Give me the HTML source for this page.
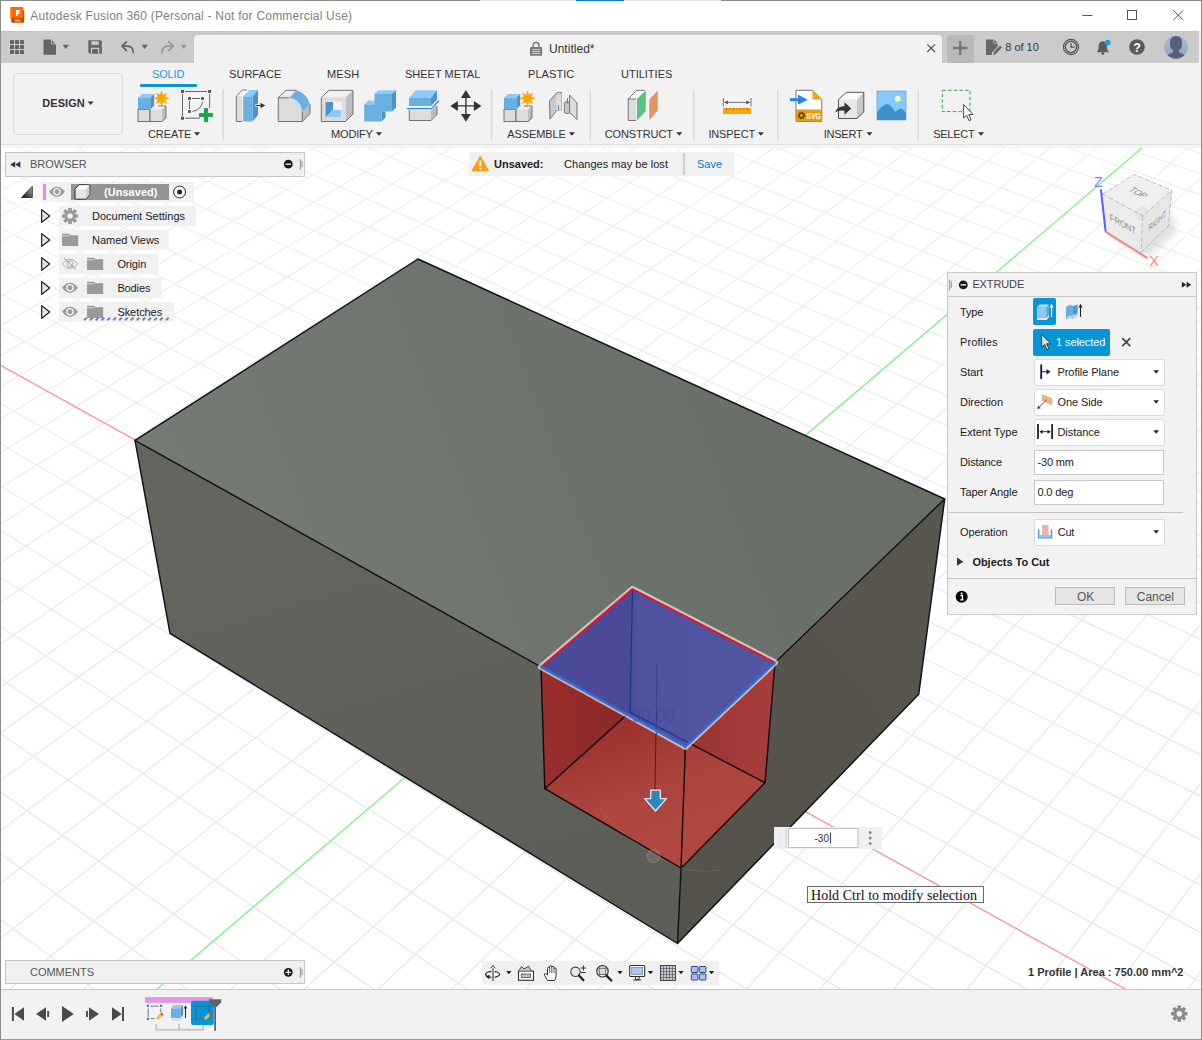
<!DOCTYPE html><html><head><meta charset="utf-8"><title>Fusion</title><style>

*{box-sizing:border-box;margin:0;padding:0}
html,body{width:1202px;height:1040px;overflow:hidden;background:#fff}
body{position:relative;font-family:"Liberation Sans",sans-serif;font-size:11px;color:#222}
.a{position:absolute}
.t{position:absolute;white-space:nowrap}
svg{overflow:visible}

</style></head><body>
<svg width="1202" height="844" viewBox="0 146 1202 844" style="position:absolute;left:0;top:146px">
<defs>
<linearGradient id="gg" gradientUnits="userSpaceOnUse" x1="0" y1="146" x2="0" y2="990"><stop offset="0" stop-color="#f0f0f0"/><stop offset="0.5" stop-color="#ebebeb"/><stop offset="1" stop-color="#e7e7e7"/></linearGradient>
<linearGradient id="gt" gradientUnits="userSpaceOnUse" x1="200" y1="560" x2="800" y2="330"><stop offset="0" stop-color="#757b74"/><stop offset="0.55" stop-color="#6e736d"/><stop offset="1" stop-color="#696e67"/></linearGradient>
<linearGradient id="gl" gradientUnits="userSpaceOnUse" x1="300" y1="500" x2="420" y2="900"><stop offset="0" stop-color="#656560"/><stop offset="1" stop-color="#5e5e59"/></linearGradient>
<linearGradient id="gr" gradientUnits="userSpaceOnUse" x1="680" y1="800" x2="940" y2="600"><stop offset="0" stop-color="#54524b"/><stop offset="1" stop-color="#59564e"/></linearGradient>
<linearGradient id="gfl" gradientUnits="userSpaceOnUse" x1="630" y1="712" x2="681" y2="868"><stop offset="0" stop-color="#9a302d"/><stop offset="0.5" stop-color="#ac453f"/><stop offset="1" stop-color="#b04841"/></linearGradient>
<linearGradient id="gwl" gradientUnits="userSpaceOnUse" x1="541" y1="700" x2="632" y2="700"><stop offset="0" stop-color="#982f2c"/><stop offset="1" stop-color="#8b2826"/></linearGradient>
<linearGradient id="gwr" gradientUnits="userSpaceOnUse" x1="632" y1="700" x2="775" y2="700"><stop offset="0" stop-color="#8e2b29"/><stop offset="0.5" stop-color="#9c3634"/><stop offset="1" stop-color="#a63e3b"/></linearGradient>
<linearGradient id="gb" gradientUnits="userSpaceOnUse" x1="541" y1="660" x2="775" y2="660"><stop offset="0" stop-color="#4b4b9b"/><stop offset="0.38" stop-color="#4a4a98"/><stop offset="0.42" stop-color="#5052a0"/><stop offset="1" stop-color="#5256a2"/></linearGradient>
</defs>
<rect x="0" y="146" width="1202" height="844" fill="#fff"/>
<path d="M-5.0 145.9L4.8 141.0M-5.0 169.4L50.7 141.0M-5.0 193.7L96.5 141.0M-5.0 218.8L142.3 141.0M-5.0 244.8L188.2 141.0M-5.0 271.7L234.0 141.0M-5.0 299.6L279.8 141.0M-5.0 328.6L325.6 141.0M-5.0 358.6L371.4 141.0M-5.0 389.9L417.3 141.0M-5.0 422.3L463.1 141.0M-5.0 456.1L508.9 141.0M-5.0 491.2L554.7 141.0M-5.0 527.8L600.5 141.0M-5.0 566.0L646.3 141.0M-5.0 605.9L692.1 141.0M-5.0 647.6L737.9 141.0M-5.0 691.1L783.7 141.0M-5.0 736.7L829.5 141.0M-5.0 784.5L875.3 141.0M-5.0 834.7L921.1 141.0M-5.0 887.3L966.9 141.0M-5.0 942.7L1012.7 141.0M2.5 995.0L1058.5 141.0M76.4 995.0L1104.3 141.0M224.1 995.0L1195.9 141.0M297.9 995.0L1207.0 172.3M371.8 995.0L1207.0 216.0M445.6 995.0L1207.0 262.4M519.4 995.0L1207.0 311.9M593.3 995.0L1207.0 364.6M667.1 995.0L1207.0 421.1M740.9 995.0L1207.0 481.7M814.8 995.0L1207.0 546.7M888.6 995.0L1207.0 616.9M962.4 995.0L1207.0 692.8M1036.2 995.0L1207.0 775.0M1110.0 995.0L1207.0 864.6M1183.8 995.0L1207.0 962.4M8.2 995.0L-5.0 984.8M101.8 995.0L-5.0 915.2M195.4 995.0L-5.0 849.7M288.9 995.0L-5.0 788.1M382.5 995.0L-5.0 730.0M476.1 995.0L-5.0 675.1M569.7 995.0L-5.0 623.1M663.2 995.0L-5.0 573.9M756.8 995.0L-5.0 527.2M850.3 995.0L-5.0 482.9M943.8 995.0L-5.0 440.6M1037.4 995.0L-5.0 400.4M1207.0 985.5L-5.0 325.5M1207.0 935.9L-5.0 290.5M1207.0 888.5L-5.0 257.0M1207.0 843.0L-5.0 225.0M1207.0 799.5L-5.0 194.2M1207.0 757.7L-5.0 164.8M1207.0 717.6L4.4 141.0M1207.0 679.1L62.5 141.0M1207.0 642.0L120.5 141.0M1207.0 606.4L178.5 141.0M1207.0 572.0L236.5 141.0M1207.0 538.9L294.5 141.0M1207.0 507.0L352.5 141.0M1207.0 476.2L410.5 141.0M1207.0 446.5L468.5 141.0M1207.0 417.7L526.5 141.0M1207.0 389.9L584.5 141.0M1207.0 363.1L642.5 141.0M1207.0 337.1L700.4 141.0M1207.0 311.9L758.4 141.0M1207.0 287.5L816.4 141.0M1207.0 263.8L874.4 141.0M1207.0 240.9L932.3 141.0M1207.0 218.6L990.3 141.0M1207.0 197.0L1048.3 141.0M1207.0 176.1L1106.2 141.0M1207.0 155.7L1164.2 141.0" stroke="url(#gg)" stroke-width="1.25" fill="none"/>
<line x1="-2" y1="363.8" x2="1128.8" y2="991" stroke="#ff9090" stroke-width="1.3"/>
<line x1="150.2" y1="995.0" x2="1150.1" y2="141.0" stroke="#7df27d" stroke-width="1.3"/>
<polygon points="418.0,259.0 944.7,499.0 685.4,746.7 135.0,440.3" fill="url(#gt)"/>
<polygon points="135.0,440.3 685.4,746.7 677.5,943.5 170.0,633.4" fill="url(#gl)"/>
<polygon points="685.4,746.7 944.7,499.0 918.7,694.3 677.5,943.5" fill="url(#gr)"/>
<polygon points="541.0,666.9 632.5,589.0 630.0,712.0 544.8,788.7" fill="url(#gwl)"/>
<polygon points="632.5,589.0 775.0,662.5 765.0,782.7 630.0,712.0" fill="url(#gwr)"/>
<polygon points="544.8,788.7 630.0,712.0 765.0,782.7 681.0,868.2" fill="url(#gfl)"/>
<path d="M418.0 259.0L944.7 499.0L918.7 694.3L677.5 943.5L170.0 633.4L135.0 440.3 Z" stroke="#0c1414" stroke-width="1.45" fill="none" stroke-linejoin="round" stroke-linecap="round"/>
<path d="M135.0 440.3L541.0 666.9 M944.7 499.0L775.0 662.5 M681.0 868.2L677.5 943.5" stroke="#0c1414" stroke-width="1.45" fill="none" stroke-linejoin="round" stroke-linecap="round"/>
<path d="M541.0 666.9L544.8 788.7L681.0 868.2L765.0 782.7L775.0 662.5 M544.8 788.7L630.0 712.0L765.0 782.7 M685.4 746.7L681.0 868.2" stroke="#100808" stroke-width="1.4" fill="none" stroke-linejoin="round" stroke-linecap="round"/>
<line x1="657" y1="664" x2="655" y2="790" stroke="#6e1414" stroke-width="1"/>
<polygon points="541.0,666.9 632.5,589.0 775.0,662.5 685.4,746.7" fill="none" stroke="#ffffff" stroke-opacity="0.6" stroke-width="6.2" stroke-linejoin="round"/>
<polygon points="541.0,666.9 632.5,589.0 775.0,662.5 685.4,746.7" fill="url(#gb)"/>
<text x="632" y="722.3" font-family="Liberation Sans" font-size="17.5" fill="#3f418c" fill-opacity="0.55" textLength="43" lengthAdjust="spacingAndGlyphs">30.00</text>
<path d="M600 809Q618 832 645 849Q664 861 681 868Q700 873 721 870" fill="none" stroke="#b0b0b0" stroke-opacity="0.22" stroke-width="0.9"/>
<circle cx="653.6" cy="856" r="6.6" fill="#9a8f8c" fill-opacity="0.3" stroke="#b8b0ae" stroke-opacity="0.3" stroke-width="1"/><path d="M655.2 854.2A2.3 2.3 0 1 0 655.2 857.8" fill="none" stroke="#5c5656" stroke-opacity="0.45" stroke-width="1.3"/>
<path d="M632.5 589.0L630.0 712.0L689.0 743.0" stroke="#173a8c" stroke-width="1.3" fill="none"/>
<line x1="657" y1="664" x2="656.3" y2="735" stroke="#3a3c86" stroke-width="1"/>
<path d="M541.0 666.9L632.5 589.0L775.0 662.5" stroke="#ff0a14" stroke-width="1.7" fill="none" stroke-linejoin="round"/>
<path d="M541.0 666.9L685.4 746.7L775.0 662.5" stroke="#2a6fdc" stroke-width="2.4" fill="none" stroke-linejoin="round"/>
</svg>
<div class="a" style="left:0px;top:0px;width:1202px;height:31px;background:#fff;"></div>
<div class="a" style="left:0px;top:0px;width:480px;height:1px;background:#8c8c8c;"></div><div class="a" style="left:480px;top:0px;width:96px;height:1px;background:#e4e4e4;"></div><div class="a" style="left:576px;top:0px;width:48px;height:1px;background:#0a78d7;"></div><div class="a" style="left:624px;top:0px;width:97px;height:1px;background:#e4e4e4;"></div><div class="a" style="left:721px;top:0px;width:481px;height:1px;background:#8c8c8c;"></div>
<svg class="a" style="left:9px;top:6px" width="17" height="18" viewBox="9 6 17 18"><path d="M11.2 10.5H24.2V21.8Q24.2 22.8 23.2 22.8H12.2Q11.2 22.8 11.2 21.8Z" fill="#b94a02"/><path d="M10 8.2Q10 7 11.2 7H22Q23.2 7 23.2 8.2V18.2H10Z" fill="#ff6a00"/><rect x="10" y="7.6" width="1.5" height="10.6" fill="#ff8a30"/><path d="M16 10H20.1V11.5H17.7V12.6H19.7V14H17.7V16H16Z" fill="#fff"/><text x="17.6" y="21.7" font-size="3.7" font-weight="bold" fill="#f3c7a6" text-anchor="middle" font-family="Liberation Sans">360</text></svg>
<div class="t" style="left:30.30px;top:7.74px;font-size:12px;line-height:16px;color:#808080;letter-spacing:0.216px;">Autodesk Fusion 360 (Personal - Not for Commercial Use)</div>
<svg class="a" style="left:1080px;top:5px" width="120" height="21" viewBox="1080 5 120 21"><path d="M1082.3 15.5H1092.5" stroke="#555" stroke-width="1"/><rect x="1127.5" y="10.5" width="9" height="9" fill="none" stroke="#555" stroke-width="1"/><path d="M1173.3 10.3L1183.3 20.1M1183.3 10.3L1173.3 20.1" stroke="#555" stroke-width="1"/></svg>
<div class="a" style="left:0px;top:31px;width:1199px;height:32px;background:#cbcbcb;"></div><div class="a" style="left:1199px;top:31px;width:3px;height:32px;background:#f2f2f2;"></div>
<div class="a" style="left:0px;top:31px;width:1199px;height:1px;background:#c4c4c4;"></div>
<div class="a" style="left:194px;top:35px;width:747.5px;height:28px;background:#f2f2f2;border-radius:4px 4px 0 0"></div>
<div class="a" style="left:0px;top:63px;width:1202px;height:82px;background:#f2f2f2;"></div>
<div class="a" style="left:0px;top:144px;width:1202px;height:1px;background:#e0e0e0;"></div><div class="a" style="left:0px;top:145px;width:1202px;height:2.6px;background:#f6f6f6;"></div>
<svg class="a" style="left:0px;top:32px" width="194" height="31" viewBox="0 32 194 31"><rect x="10" y="40" width="4" height="4" rx="0.6" fill="#646464"/><rect x="10" y="45" width="4" height="4" rx="0.6" fill="#646464"/><rect x="10" y="50" width="4" height="4" rx="0.6" fill="#646464"/><rect x="15" y="40" width="4" height="4" rx="0.6" fill="#646464"/><rect x="15" y="45" width="4" height="4" rx="0.6" fill="#646464"/><rect x="15" y="50" width="4" height="4" rx="0.6" fill="#646464"/><rect x="20" y="40" width="4" height="4" rx="0.6" fill="#646464"/><rect x="20" y="45" width="4" height="4" rx="0.6" fill="#646464"/><rect x="20" y="50" width="4" height="4" rx="0.6" fill="#646464"/><path d="M43.5 39.6H51.2L56 44.4V54.8H43.5Z" fill="#646464"/><path d="M51.6 39.2V43.9H56.4" fill="none" stroke="#cbcbcb" stroke-width="0.9"/><polygon points="62.40,44.70 69.00,44.70 65.70,48.90" fill="#646464"/><path d="M88.3 40.3H100.8L101.8 41.3V53.7H90L88.3 52Z" fill="#646464"/><rect x="91.3" y="41.3" width="7.4" height="3.6" fill="#cbcbcb"/><path d="M91.5 53.7V48.3H98.6V53.7" fill="none" stroke="#cbcbcb" stroke-width="1.2"/><path d="M126.5 41.8L122 46.2L126.5 50.6M122.3 46.2H128Q133 46.5 133.3 52.5" fill="none" stroke="#646464" stroke-width="1.8" stroke-linejoin="round" stroke-linecap="round"/><polygon points="141.40,44.70 148.00,44.70 144.70,48.90" fill="#646464"/><path d="M168.8 41.8L173.3 46.2L168.8 50.6M173 46.2H167.3Q162.3 46.5 162 52.5" fill="none" stroke="#9a9a9a" stroke-width="1.8" stroke-linejoin="round" stroke-linecap="round"/><polygon points="180.50,44.70 187.10,44.70 183.80,48.90" fill="#9a9a9a"/></svg>
<svg class="a" style="left:525px;top:38px" width="420" height="22" viewBox="525 38 420 22"><rect x="530" y="47" width="12.1" height="8.8" rx="0.8" fill="#777"/><path d="M533.2 47V45.4Q533.2 42.6 536 42.6Q538.9 42.6 538.9 45.4V47" fill="none" stroke="#777" stroke-width="1.5"/><path d="M532 49.6H540.2M532 51.6H540.2M532 53.6H540.2" stroke="#f2f2f2" stroke-width="0.8"/><path d="M927.3 44.3L935 52M935 44.3L927.3 52" stroke="#555" stroke-width="1.2"/></svg>
<div class="t" style="left:549.00px;top:40.64px;font-size:12px;line-height:16px;color:#333;letter-spacing:0.016px;">Untitled*</div>
<div class="a" style="left:946.5px;top:35px;width:27.5px;height:27.5px;background:#b9b9b9;border-radius:3px"></div>
<svg class="a" style="left:946px;top:35px" width="256" height="28" viewBox="946 35 256 28"><path d="M960.3 41V55M953.3 48H967.3" stroke="#777" stroke-width="2.4"/><path d="M986 39.5H994L997.6 43V46.5L992 52.5V55H986Z" fill="#666"/><path d="M993.8 39.3V43.3H997.8" fill="none" stroke="#cbcbcb" stroke-width="0.8"/><path d="M992.8 55.3L993.6 51.8L1000 45.2L1002.3 47.5L995.9 54.2Z" fill="#666" stroke="#cbcbcb" stroke-width="0.7"/><circle cx="1071" cy="47" r="7.6" fill="none" stroke="#555" stroke-width="1.1"/><circle cx="1071" cy="47" r="5.7" fill="none" stroke="#555" stroke-width="1.5"/><path d="M1071 43.3V47.2H1074.6" fill="none" stroke="#555" stroke-width="1.3"/><path d="M1096.6 52.3Q1098.7 50.5 1098.7 46.5Q1098.7 41.5 1102.8 41.2Q1106.9 41.5 1106.9 46.5Q1106.9 50.5 1109 52.3Z" fill="#5a5a5a"/><circle cx="1102.8" cy="53.6" r="1.4" fill="#5a5a5a"/><circle cx="1107.7" cy="42.6" r="2.9" fill="#1e9ae6"/><circle cx="1137" cy="47" r="7.8" fill="#5a5a5a"/><text x="1137" y="51.6" font-size="12.5" font-weight="bold" fill="#fff" text-anchor="middle" font-family="Liberation Sans">?</text><defs><linearGradient id="av" x1="0" y1="0" x2="0" y2="1"><stop offset="0" stop-color="#b0c1da"/><stop offset="1" stop-color="#8a9ebf"/></linearGradient><clipPath id="avc"><circle cx="1176" cy="47" r="11.8"/></clipPath></defs><circle cx="1176" cy="47" r="11.8" fill="url(#av)"/><g clip-path="url(#avc)"><path d="M1170.1 41.5Q1170.3 36 1176 35.9Q1181.8 36 1181.9 41.5V45Q1181.9 48.6 1179 50.3V52.2Q1183.5 54 1186.5 56.5V60H1165.5V56.5Q1168.5 54 1173 52.2V50.3Q1170.1 48.6 1170.1 45Z" fill="#55627a"/></g></svg>
<div class="t" style="left:1005.30px;top:40.03px;font-size:11px;line-height:14px;color:#333;letter-spacing:-0.020px;">8 of 10</div>
<div class="a" style="left:13px;top:73.4px;width:109.6px;height:61.2px;background:#f2f2f2;border:1.3px solid #dadada;border-radius:5px"></div>
<div class="t" style="left:42.30px;top:96.13px;font-size:11px;line-height:14px;color:#333;font-weight:bold;letter-spacing:0.054px;">DESIGN</div>
<svg class="a" style="left:86px;top:99px" width="12" height="9" viewBox="86 99 12 9"><polygon points="87.60,101.50 93.60,101.50 90.60,105.10" fill="#333"/></svg>
<div class="t" style="left:152.00px;top:67.13px;font-size:11px;line-height:14px;color:#1b9ae0;letter-spacing:-0.142px;">SOLID</div>
<div class="a" style="left:139.5px;top:83.5px;width:57px;height:3px;background:#0696d7;border-radius:1px"></div>
<div class="t" style="left:229.00px;top:67.13px;font-size:11px;line-height:14px;color:#333;letter-spacing:0.049px;">SURFACE</div>
<div class="t" style="left:327.00px;top:67.13px;font-size:11px;line-height:14px;color:#333;letter-spacing:0.129px;">MESH</div>
<div class="t" style="left:405.00px;top:67.13px;font-size:11px;line-height:14px;color:#333;letter-spacing:-0.008px;">SHEET METAL</div>
<div class="t" style="left:528.00px;top:67.13px;font-size:11px;line-height:14px;color:#333;letter-spacing:0.064px;">PLASTIC</div>
<div class="t" style="left:621.00px;top:67.13px;font-size:11px;line-height:14px;color:#333;letter-spacing:-0.005px;">UTILITIES</div>
<div class="t" style="left:148.00px;top:127.13px;font-size:11px;line-height:14px;color:#333;letter-spacing:-0.084px;">CREATE</div>
<div class="t" style="left:331.00px;top:127.13px;font-size:11px;line-height:14px;color:#333;letter-spacing:-0.163px;">MODIFY</div>
<div class="t" style="left:507.20px;top:127.13px;font-size:11px;line-height:14px;color:#333;letter-spacing:-0.089px;">ASSEMBLE</div>
<div class="t" style="left:604.70px;top:127.13px;font-size:11px;line-height:14px;color:#333;letter-spacing:-0.094px;">CONSTRUCT</div>
<div class="t" style="left:708.40px;top:127.13px;font-size:11px;line-height:14px;color:#333;letter-spacing:-0.154px;">INSPECT</div>
<div class="t" style="left:823.70px;top:127.13px;font-size:11px;line-height:14px;color:#333;letter-spacing:-0.240px;">INSERT</div>
<div class="t" style="left:933.20px;top:127.13px;font-size:11px;line-height:14px;color:#333;letter-spacing:-0.265px;">SELECT</div>
<svg class="a" style="left:130px;top:86px" width="870" height="58" viewBox="130 86 870 58"><path d="M223.2 89.5V140.5" stroke="#dadada" stroke-width="1.6"/><path d="M491.5 89.5V140.5" stroke="#dadada" stroke-width="1.6"/><path d="M590.3 89.5V140.5" stroke="#dadada" stroke-width="1.6"/><path d="M693.8 89.5V140.5" stroke="#dadada" stroke-width="1.6"/><path d="M777.8 89.5V140.5" stroke="#dadada" stroke-width="1.6"/><path d="M918.2 89.5V140.5" stroke="#dadada" stroke-width="1.6"/><polygon points="194.00,132.20 200.00,132.20 197.00,135.80" fill="#333"/><polygon points="376.00,132.20 382.00,132.20 379.00,135.80" fill="#333"/><polygon points="568.90,132.20 574.90,132.20 571.90,135.80" fill="#333"/><polygon points="676.30,132.20 682.30,132.20 679.30,135.80" fill="#333"/><polygon points="757.90,132.20 763.90,132.20 760.90,135.80" fill="#333"/><polygon points="866.50,132.20 872.50,132.20 869.50,135.80" fill="#333"/><polygon points="978.00,132.20 984.00,132.20 981.00,135.80" fill="#333"/><rect x="138" y="109.5" width="12" height="12" fill="#dcdcdc" stroke="#666" stroke-width="0.9"/><polygon points="150,109.5 154,106 166,106 162,109.5" fill="#f0f0f0"/><polygon points="162,109.5 166,106 166,118 162,121.5" fill="#bdbdbd"/><rect x="150" y="109.5" width="12" height="12" fill="#dcdcdc"/><path d="M150 109.5V121.5H162L166 118V106H158" fill="none" stroke="#666" stroke-width="0.9"/><polygon points="138,98 142,94 154.2,94 150.3,98" fill="#8ccbf9"/><polygon points="150.3,98 154.2,94 154.2,105.5 150.3,109.5" fill="#4a93cc"/><rect x="138" y="98" width="12.3" height="11.5" fill="#6aafe2"/><polygon points="161.50,90.10 162.99,94.70 167.30,92.50 165.10,96.81 169.70,98.30 165.10,99.79 167.30,104.10 162.99,101.90 161.50,106.50 160.01,101.90 155.70,104.10 157.90,99.79 153.30,98.30 157.90,96.81 155.70,92.50 160.01,94.70" fill="#ffa500"/><path d="M185 91.5H207M182.5 94V116M185 118.2H200M209.6 94V108" stroke="#555" stroke-width="0.9" fill="none"/><rect x="181" y="90" width="3" height="3" fill="#555"/><rect x="208.1" y="90" width="3" height="3" fill="#555"/><rect x="181" y="116.7" width="3" height="3" fill="#555"/><path d="M192 98.5H200M189.5 101V109M202.6 101.5Q201.5 109.5 192.5 111.5" stroke="#555" stroke-width="0.9" fill="none"/><rect x="188.1" y="97.1" width="2.8" height="2.8" fill="#555"/><rect x="201.1" y="97.1" width="2.8" height="2.8" fill="#555"/><rect x="188.1" y="110.1" width="2.8" height="2.8" fill="#555"/><path d="M206 108V122M199 115H213" stroke="#1fa64a" stroke-width="4.2"/><path d="M236.3 96L242.5 90H247L242.3 96Z" fill="#f6f6f6"/><rect x="236.3" y="96" width="6" height="25.5" fill="#dcdcdc"/><path d="M242.3 121.5H236.3V96L242.5 90H247" fill="none" stroke="#666" stroke-width="0.9"/><polygon points="243.2,96.5 249.5,90 258,90 252.5,96.5" fill="#8ccbf9"/><polygon points="252.5,96.5 258,90 258,115 252.5,121.5" fill="#4a93cc"/><rect x="243.2" y="96.5" width="9.3" height="25" fill="#6aafe2"/><path d="M255.5 105.5H262" stroke="#fff" stroke-width="2.4"/><path d="M256 105.5H262" stroke="#333" stroke-width="1"/><polygon points="260.5,102.8 265.2,105.5 260.5,108.2" fill="#333"/><path d="M278.3 97.8L286 90.3H296.5L289.5 97.8Z" fill="#ececec"/><path d="M278.3 97.8H289.5Q300.5 99.5 302.3 111.5V121.5H278.3Z" fill="#dcdcdc"/><path d="M302.3 111.5L310 104.5V113.5L302.3 121.5Z" fill="#bdbdbd"/><path d="M289.5 97.8L296.5 90.3Q307.5 93.5 310 104.5L302.3 111.5Q300.5 99.5 289.5 97.8Z" fill="#6aafe2"/><path d="M289.5 97.8H278.3L286 90.3H296.5M278.3 97.8V121.5H302.3L310 113.5V104.5M302.3 121.5V111.5" fill="none" stroke="#666" stroke-width="0.9"/><polygon points="321.3,97.5 329,90.3 353,90.3 345.5,97.5" fill="#f0f0f0"/><polygon points="345.5,97.5 353,90.3 353,114 345.5,121.5" fill="#bdbdbd"/><rect x="321.3" y="97.5" width="24.2" height="24" fill="#dcdcdc"/><rect x="325" y="101.5" width="17" height="16.5" fill="#f2f2f2"/><polygon points="325.5,102 333,102 333,110 325.5,117.5" fill="#4a93cc"/><polygon points="325.5,117.5 333,110 341.3,110 341.3,117.5" fill="#8ccbf9"/><path d="M321.3 97.5L329 90.3H353V114L345.5 121.5H321.3Z" fill="none" stroke="#666" stroke-width="0.9"/><polygon points="374.5,94 378.5,90.2 396,90.2 392,94" fill="#8ccbf9"/><polygon points="392,94 396,90.2 396,107.5 392,111.5" fill="#4a93cc"/><rect x="374.5" y="94" width="17.5" height="17.5" fill="#6aafe2"/><polygon points="364.2,104.5 368.2,100.5 375,100.5 375,104.5" fill="#8ccbf9"/><polygon points="381.5,111.5 385.5,111.5 385.5,117.5 381.5,121.5" fill="#4a93cc"/><rect x="364.2" y="104.5" width="17.3" height="17" fill="#6aafe2"/><polygon points="409,98 415.5,90.3 437,90.3 431,98" fill="#8ccbf9"/><polygon points="431,98 437,90.3 437,99.5 431,106" fill="#4a93cc"/><rect x="409" y="98" width="22" height="8" fill="#6aafe2"/><polygon points="409.3,110.5 431,110.5 431,120.5 409.3,120.5" fill="#dcdcdc"/><polygon points="431,110.5 437,105 437,114.5 431,120.5" fill="#bdbdbd"/><path d="M409.3 110V120.5H431L437 114.5V106" fill="none" stroke="#666" stroke-width="0.9"/><path d="M407 108.6H431.5L439 100.5" fill="none" stroke="#1e88e5" stroke-width="1.2"/><path d="M465.9 95.9V115.9M455.9 105.9H475.9" stroke="#333" stroke-width="1.4"/><polygon points="465.9,90.1 460.9,97.9 470.9,97.9" fill="#333"/><polygon points="465.9,121.7 460.9,113.9 470.9,113.9" fill="#333"/><polygon points="450.4,105.9 457.9,100.9 457.9,110.9" fill="#333"/><polygon points="481.4,105.9 473.9,100.9 473.9,110.9" fill="#333"/><rect x="504" y="109.5" width="12" height="12" fill="#dcdcdc" stroke="#666" stroke-width="0.9"/><polygon points="516,109.5 520,106 532,106 528,109.5" fill="#f0f0f0"/><polygon points="528,109.5 532,106 532,118 528,121.5" fill="#bdbdbd"/><rect x="516" y="109.5" width="12" height="12" fill="#dcdcdc"/><path d="M516 109.5V121.5H528L532 118V106H524" fill="none" stroke="#666" stroke-width="0.9"/><polygon points="504,98 508,94 520.2,94 516.3,98" fill="#8ccbf9"/><polygon points="516.3,98 520.2,94 520.2,105.5 516.3,109.5" fill="#4a93cc"/><rect x="504" y="98" width="12.3" height="11.5" fill="#6aafe2"/><polygon points="527.50,90.10 528.99,94.70 533.30,92.50 531.10,96.81 535.70,98.30 531.10,99.79 533.30,104.10 528.99,101.90 527.50,106.50 526.01,101.90 521.70,104.10 523.90,99.79 519.30,98.30 523.90,96.81 521.70,92.50 526.01,94.70" fill="#ffa500"/><path d="M549.5 101L556 93.5Q558 91.8 561.5 92.5V110L556 110.5V111.5L550 119Z" fill="#c8c8c8" stroke="#666" stroke-width="0.9"/><path d="M556.2 94.5Q558.5 92 561.6 93V110.5H556.2Z" fill="#e0e0e0"/><ellipse cx="558.8" cy="93.6" rx="1.9" ry="0.9" fill="#f4f4f4" stroke="#888" stroke-width="0.5"/><path d="M569.5 95L577 103V119.5L569.5 112.5Z" fill="#dcdcdc" stroke="#666" stroke-width="0.9"/><path d="M564.3 103.5Q564.3 101.5 567 101.5Q569.6 101.5 569.6 103.5V113Q567 114.5 564.3 112.5Z" fill="#c4c4c4" stroke="#666" stroke-width="0.8"/><path d="M558.5 105V110M567.5 98V103.5" stroke="#1e88e5" stroke-width="0.9"/><path d="M628.2 99L636.5 90.3H644.5L636.5 99V120.5H628.2Z" fill="#f4f4f4"/><rect x="628.2" y="99" width="8" height="21.5" fill="#dcdcdc"/><path d="M628.2 99L636.5 90.3H644.5M628.2 99V120.5H636M628.2 99H636" fill="none" stroke="#666" stroke-width="0.9"/><polygon points="637,99 645.8,90.5 645.8,111 637,120.5" fill="#58c27e"/><polygon points="649.3,99.5 657.8,90.5 657.8,110.5 649.3,120.3" fill="#e2955f"/><path d="M723.3 98V106.5M751 98V106.5M725 102.4H749.5" stroke="#555" stroke-width="0.8" fill="none"/><polygon points="724,102.4 728,100.5 728,104.3" fill="#555"/><polygon points="750.3,102.4 746.3,100.5 746.3,104.3" fill="#555"/><rect x="723" y="108" width="28" height="6" fill="#fba500"/><path d="M726.5 108V110.3" stroke="#7a5a10" stroke-width="0.7"/><path d="M730 108V109.6" stroke="#7a5a10" stroke-width="0.7"/><path d="M733.5 108V110.3" stroke="#7a5a10" stroke-width="0.7"/><path d="M737 108V109.6" stroke="#7a5a10" stroke-width="0.7"/><path d="M740.5 108V110.3" stroke="#7a5a10" stroke-width="0.7"/><path d="M744 108V109.6" stroke="#7a5a10" stroke-width="0.7"/><path d="M747.5 108V110.3" stroke="#7a5a10" stroke-width="0.7"/><path d="M796 90.3H812.5L821.8 99.5V121.5H796Z" fill="#fff" stroke="#666" stroke-width="0.9"/><polygon points="812.5,90.3 821.8,99.5 812.5,99.5" fill="#f0a21c"/><rect x="796" y="109.5" width="25.8" height="12" fill="#e59a14"/><path d="M790 99.7H799" stroke="#1e88e5" stroke-width="3"/><polygon points="798,94.8 807.8,99.7 798,104.6" fill="#1e88e5"/><circle cx="801.5" cy="115.5" r="3" fill="none" stroke="#3a2a00" stroke-width="1.4" stroke-dasharray="1.2 1.1"/><circle cx="801.5" cy="115.5" r="2.2" fill="none" stroke="#3a2a00" stroke-width="0.9"/><text x="806.3" y="119" font-family="Liberation Sans" font-weight="bold" font-size="8.6" fill="#fff" textLength="14.5" lengthAdjust="spacingAndGlyphs">SVG</text><polygon points="838.5,99.5 846.5,92.3 863.8,92.3 857,99.5" fill="#fafafa"/><polygon points="857,99.5 863.8,92.3 863.8,112 857,118.5" fill="#c6c9cd"/><rect x="838.5" y="99.5" width="18.5" height="19" fill="#e6e7e9"/><path d="M838.5 99.5L846.5 92.3H863.8V112L857 118.5H838.5Z" fill="none" stroke="#444" stroke-width="0.9"/><path d="M835 112.5Q837.5 106 844.5 106.3V102.3L851.2 108.5L844.5 114.7V110.8Q839.5 109.5 835 112.5Z" fill="#333"/><rect x="877" y="91" width="29" height="29" fill="#84caff"/><path d="M877 120V112.5Q883 104 887 104Q890 104 895.5 112Q899 108.5 901 108.5Q903 108.5 906 113.5V120Z" fill="#3f90c8"/><circle cx="897.8" cy="98.8" r="3" fill="#fbf3b0"/><rect x="877" y="91" width="29" height="29" fill="none" stroke="#4a9ad8" stroke-width="0.6"/><rect x="942.3" y="90.3" width="27.7" height="21.3" fill="none" stroke="#28b04a" stroke-width="1" stroke-dasharray="3.6 2.1"/><path d="M963.6 104.5V118L966.7 115.2L969 120.6L971 119.7L968.8 114.5H973Z" fill="#fff" stroke="#333" stroke-width="0.9" stroke-linejoin="round"/></svg><div class="a" style="left:5px;top:152px;width:299.5px;height:24.5px;background:#f1f1f1;border:1px solid #c6c6c6"></div>
<div class="t" style="left:30.00px;top:157.33px;font-size:11px;line-height:14px;color:#555;letter-spacing:-0.006px;">BROWSER</div>
<svg class="a" style="left:5px;top:152px" width="300" height="25" viewBox="5 152 300 25"><polygon points="10.2,164.6 15.2,161.5 15.2,167.7" fill="#333"/><polygon points="15.3,164.6 20.3,161.5 20.3,167.7" fill="#333"/><circle cx="288.3" cy="164.2" r="4.4" fill="#1a1a1a"/><path d="M285.6 164.2H291" stroke="#fff" stroke-width="1.3"/><path d="M300.3 159V170M302 161V167.5" stroke="#777" stroke-width="0.8"/></svg>
<div class="a" style="left:41.2px;top:182.2px;width:153px;height:19.5px;background:#f1f1f1;"></div>
<div class="a" style="left:59.2px;top:206.3px;width:137px;height:19.5px;background:#f1f1f1;"></div>
<div class="a" style="left:59.2px;top:230.3px;width:110px;height:19.5px;background:#f1f1f1;"></div>
<div class="a" style="left:59.2px;top:254.3px;width:98.5px;height:19.5px;background:#f1f1f1;"></div>
<div class="a" style="left:59.2px;top:278.2px;width:102.6px;height:19.5px;background:#f1f1f1;"></div>
<div class="a" style="left:59.2px;top:302.2px;width:114.7px;height:19.6px;background:#f1f1f1;"></div>
<div class="a" style="left:43.1px;top:184px;width:2.9px;height:15.8px;background:#e48de4;"></div>
<div class="a" style="left:71.2px;top:184px;width:98px;height:15.8px;background:#949494;"></div>
<svg class="a" style="left:10px;top:180px" width="190" height="145" viewBox="10 180 190 145"><defs><linearGradient id="tg" x1="0.2" y1="1" x2="1" y2="0.3"><stop offset="0" stop-color="#1a1a1a"/><stop offset="1" stop-color="#9a9a9a"/></linearGradient></defs><polygon points="32.3,186.3 32.3,197.5 21.5,197.5" fill="url(#tg)" stroke="#222" stroke-width="0.8" stroke-linejoin="round"/><path d="M49 191.8Q53 186.8 57 186.8Q61 186.8 65 191.8Q61 196.8 57 196.8Q53 196.8 49 191.8Z" fill="#9a9a9a"/><circle cx="57" cy="191.8" r="3.1" fill="none" stroke="#f4f4f4" stroke-width="1.3"/><path d="M75 189.3L79 184.7H88.6Q89.8 184.7 89.8 186V194.5L86 199.2H76.2Q75 199.2 75 198Z" fill="#e4e6ec" stroke="#222" stroke-width="0.9" stroke-linejoin="round"/><path d="M75.6 189.3L79.3 185.2H89.2L85.8 189.3Z" fill="#fdfdfd"/><path d="M85.9 189.4L89.3 185.4V194.3L85.9 198.6Z" fill="#cfd3dc"/><circle cx="179.6" cy="192" r="5.9" fill="#fff" stroke="#222" stroke-width="1"/><circle cx="179.6" cy="192" r="2.5" fill="#222"/><path d="M41.7 209.6L49.7 216L41.7 222.4Z" fill="#e6e6e8" stroke="#111" stroke-width="1.1" stroke-linejoin="round"/><path d="M41.7 233.6L49.7 240L41.7 246.4Z" fill="#e6e6e8" stroke="#111" stroke-width="1.1" stroke-linejoin="round"/><path d="M41.7 257.6L49.7 264L41.7 270.4Z" fill="#e6e6e8" stroke="#111" stroke-width="1.1" stroke-linejoin="round"/><path d="M41.7 281.6L49.7 288L41.7 294.4Z" fill="#e6e6e8" stroke="#111" stroke-width="1.1" stroke-linejoin="round"/><path d="M41.7 305.6L49.7 312L41.7 318.4Z" fill="#e6e6e8" stroke="#111" stroke-width="1.1" stroke-linejoin="round"/><rect x="68.3" y="208" width="3.6" height="16" fill="#9a9a9a" transform="rotate(0 70.1 216)"/><rect x="68.3" y="208" width="3.6" height="16" fill="#9a9a9a" transform="rotate(45 70.1 216)"/><rect x="68.3" y="208" width="3.6" height="16" fill="#9a9a9a" transform="rotate(90 70.1 216)"/><rect x="68.3" y="208" width="3.6" height="16" fill="#9a9a9a" transform="rotate(135 70.1 216)"/><circle cx="70.1" cy="216" r="5.8" fill="#9a9a9a"/><circle cx="70.1" cy="216" r="2.7" fill="#f1f1f1"/><path d="M62 233.7H69L70.3 235.3H78.2V246.1H62Z" fill="#9a9a9a"/><path d="M62 235.8H69.3" stroke="#f1f1f1" stroke-width="0.7"/><path d="M62.3 263.8Q66 259.1 70 259.1Q74 259.1 77.7 263.8Q74 268.5 70 268.5Q66 268.5 62.3 263.8Z" fill="none" stroke="#9a9a9a" stroke-width="0.8"/><circle cx="70" cy="263.8" r="3" fill="none" stroke="#9a9a9a" stroke-width="0.8"/><path d="M64 258.1L76 269.5" stroke="#777" stroke-width="0.7"/><path d="M87 257.7H94L95.3 259.3H103.2V270.1H87Z" fill="#9a9a9a"/><path d="M87 259.8H94.3" stroke="#f1f1f1" stroke-width="0.7"/><path d="M62 287.8Q66 282.8 70 282.8Q74 282.8 78 287.8Q74 292.8 70 292.8Q66 292.8 62 287.8Z" fill="#9a9a9a"/><circle cx="70" cy="287.8" r="3.1" fill="none" stroke="#f4f4f4" stroke-width="1.3"/><path d="M87 281.7H94L95.3 283.3H103.2V294.1H87Z" fill="#9a9a9a"/><path d="M87 283.8H94.3" stroke="#f1f1f1" stroke-width="0.7"/><path d="M62 311.8Q66 306.8 70 306.8Q74 306.8 78 311.8Q74 316.8 70 316.8Q66 316.8 62 311.8Z" fill="#9a9a9a"/><circle cx="70" cy="311.8" r="3.1" fill="none" stroke="#f4f4f4" stroke-width="1.3"/><path d="M87 305.7H94L95.3 307.3H103.2V318.1H87Z" fill="#9a9a9a"/><path d="M87 307.8H94.3" stroke="#f1f1f1" stroke-width="0.7"/><path d="M84 320.3L86.8 317.7" stroke="#6a84b0" stroke-width="1.9"/><path d="M89.85 320.3L92.65 317.7" stroke="#6a84b0" stroke-width="1.9"/><path d="M95.7 320.3L98.5 317.7" stroke="#6a84b0" stroke-width="1.9"/><path d="M101.55 320.3L104.35 317.7" stroke="#6a84b0" stroke-width="1.9"/><path d="M107.4 320.3L110.2 317.7" stroke="#6a84b0" stroke-width="1.9"/><path d="M113.25 320.3L116.05 317.7" stroke="#6a84b0" stroke-width="1.9"/><path d="M119.1 320.3L121.9 317.7" stroke="#6a84b0" stroke-width="1.9"/><path d="M124.95 320.3L127.75 317.7" stroke="#6a84b0" stroke-width="1.9"/><path d="M130.8 320.3L133.6 317.7" stroke="#6a84b0" stroke-width="1.9"/><path d="M136.65 320.3L139.45 317.7" stroke="#6a84b0" stroke-width="1.9"/><path d="M142.5 320.3L145.3 317.7" stroke="#6a84b0" stroke-width="1.9"/><path d="M148.35 320.3L151.15 317.7" stroke="#6a84b0" stroke-width="1.9"/><path d="M154.2 320.3L157 317.7" stroke="#6a84b0" stroke-width="1.9"/><path d="M160.05 320.3L162.85 317.7" stroke="#6a84b0" stroke-width="1.9"/><path d="M165.9 320.3L168.7 317.7" stroke="#6a84b0" stroke-width="1.9"/></svg>
<div class="t" style="left:104.00px;top:184.83px;font-size:11px;line-height:14px;color:#fff;font-weight:bold;letter-spacing:0.036px;">(Unsaved)</div>
<div class="t" style="left:92.00px;top:209.13px;font-size:11px;line-height:14px;color:#1a1a1a;letter-spacing:0.004px;">Document Settings</div>
<div class="t" style="left:92.00px;top:233.13px;font-size:11px;line-height:14px;color:#1a1a1a;letter-spacing:-0.033px;">Named Views</div>
<div class="t" style="left:117.40px;top:257.13px;font-size:11px;line-height:14px;color:#1a1a1a;letter-spacing:-0.090px;">Origin</div>
<div class="t" style="left:117.40px;top:281.13px;font-size:11px;line-height:14px;color:#1a1a1a;letter-spacing:-0.122px;">Bodies</div>
<div class="t" style="left:117.40px;top:305.13px;font-size:11px;line-height:14px;color:#1a1a1a;letter-spacing:-0.068px;">Sketches</div>
<div class="a" style="left:469px;top:152.2px;width:264.5px;height:23.5px;background:#f1f1f1;"></div><div class="a" style="left:683.2px;top:153px;width:1.5px;height:22px;background:#cfcfcf;"></div>
<svg class="a" style="left:470px;top:152px" width="265" height="24" viewBox="470 152 265 24"><path d="M480.3 156.6L488.3 170.6H472.3Z" fill="#f6a01c" stroke="#f6a01c" stroke-width="1.2" stroke-linejoin="round"/><path d="M480.3 160.6V166.4" stroke="#fff" stroke-width="1.7"/><circle cx="480.3" cy="168.6" r="0.95" fill="#fff"/></svg>
<div class="t" style="left:494.00px;top:157.13px;font-size:11px;line-height:14px;color:#222;font-weight:bold;letter-spacing:-0.002px;">Unsaved:</div>
<div class="t" style="left:564.00px;top:157.13px;font-size:11px;line-height:14px;color:#222;letter-spacing:0.035px;">Changes may be lost</div>
<div class="t" style="left:697.00px;top:157.13px;font-size:11px;line-height:14px;color:#0a78b8;letter-spacing:-0.018px;">Save</div>
<svg class="a" style="left:1085px;top:165px" width="110" height="110" viewBox="1085 165 110 110"><defs><filter id="vb" x="-50%" y="-50%" width="200%" height="200%"><feGaussianBlur stdDeviation="5"/></filter></defs><polygon points="1112.0,236.0 1146.0,258.0 1176.0,232.0 1172.0,214.0 1140.0,232.0" fill="#000" opacity="0.13" filter="url(#vb)"/><polygon points="1134.2,174.5 1171.8,190.4 1142.7,215.8 1102.5,194.1" fill="#eeeeee" fill-opacity="0.88"/><polygon points="1102.5,194.1 1142.7,215.8 1141.1,252.3 1105.6,231.7" fill="#e9e9e9" fill-opacity="0.88"/><polygon points="1142.7,215.8 1171.8,190.4 1168.6,225.3 1141.1,252.3" fill="#e4e4e4" fill-opacity="0.88"/><polygon points="1136.0,208.5 1142.7,205.5 1147.5,209.5 1147.3,217.0 1142.5,222.5 1136.2,218.5" fill="#dfe3ea" fill-opacity="0.8"/><path d="M1102.5 194.1L1134.2 174.5L1171.8 190.4L1168.6 225.3L1141.1 252.3" stroke="#a8a8a8" stroke-width="0.75" stroke-dasharray="5 2" fill="none"/><path d="M1102.5 194.1L1142.7 215.8L1171.8 190.4 M1142.7 215.8L1141.1 252.3" stroke="#a8a8a8" stroke-width="0.75" stroke-dasharray="5 2" fill="none"/><g transform="matrix(0.4020 0.2170 0.0310 0.3760 1102.50 194.10)"><text x="14" y="62" font-size="26" font-family="Liberation Sans" fill="#8a8c90" textLength="65" lengthAdjust="spacingAndGlyphs">FRONT</text></g><g transform="matrix(0.2910 -0.2540 -0.0160 0.3650 1142.70 215.80)"><text x="23" y="59.5" font-size="26" font-family="Liberation Sans" fill="#8a8c90" textLength="60" lengthAdjust="spacingAndGlyphs">RIGHT</text></g><g transform="matrix(0.4020 0.2170 -0.3170 0.1960 1134.20 174.50)"><text x="25.5" y="52.4" font-size="26" font-family="Liberation Sans" fill="#8a8c90" textLength="38" lengthAdjust="spacingAndGlyphs">TOP</text></g><path d="M1100.9 189.3L1105.6 231.7" stroke="#5c5cf8" stroke-width="2"/><path d="M1105.6 231.7L1147.4 258.1" stroke="#f08c8c" stroke-width="2.2"/><text x="1094" y="186.5" font-size="14.5" font-family="Liberation Sans" fill="#8080ff">Z</text><text x="1149.3" y="266.3" font-size="14.5" font-family="Liberation Sans" fill="#ff8a8a">X</text></svg>
<div class="a" style="left:947px;top:272px;width:250px;height:343px;background:#f2f2f2;border:1px solid #c8c8c8"></div>
<div class="a" style="left:948px;top:296px;width:248px;height:1px;background:#c8c8c8;"></div>
<div class="a" style="left:949px;top:512px;width:234px;height:1px;background:#c2c2c2;"></div>
<div class="a" style="left:948px;top:578px;width:248px;height:1px;background:#c2c2c2;"></div>
<svg class="a" style="left:948px;top:273px" width="248" height="23" viewBox="948 273 248 23"><path d="M949.7 279.5V290.5M951.3 281.5V288" stroke="#777" stroke-width="0.8"/><circle cx="963.3" cy="284.9" r="4.4" fill="#1a1a1a"/><path d="M960.6 284.9H966" stroke="#fff" stroke-width="1.3"/><polygon points="1181.8,281.7 1186.3,284.7 1181.8,287.7" fill="#222"/><polygon points="1186.6,281.7 1191.1,284.7 1186.6,287.7" fill="#222"/></svg>
<div class="t" style="left:972.40px;top:277.33px;font-size:11px;line-height:14px;color:#444;letter-spacing:-0.123px;">EXTRUDE</div>
<div class="t" style="left:960.00px;top:305.13px;font-size:11px;line-height:14px;color:#1a1a1a;letter-spacing:-0.136px;">Type</div>
<div class="t" style="left:960.00px;top:335.13px;font-size:11px;line-height:14px;color:#1a1a1a;letter-spacing:0.103px;">Profiles</div>
<div class="t" style="left:960.00px;top:365.13px;font-size:11px;line-height:14px;color:#1a1a1a;letter-spacing:-0.046px;">Start</div>
<div class="t" style="left:960.00px;top:395.13px;font-size:11px;line-height:14px;color:#1a1a1a;letter-spacing:-0.045px;">Direction</div>
<div class="t" style="left:960.00px;top:425.13px;font-size:11px;line-height:14px;color:#1a1a1a;letter-spacing:-0.035px;">Extent Type</div>
<div class="t" style="left:960.00px;top:455.13px;font-size:11px;line-height:14px;color:#1a1a1a;letter-spacing:-0.099px;">Distance</div>
<div class="t" style="left:960.00px;top:485.13px;font-size:11px;line-height:14px;color:#1a1a1a;letter-spacing:-0.054px;">Taper Angle</div>
<div class="t" style="left:960.00px;top:525.13px;font-size:11px;line-height:14px;color:#1a1a1a;letter-spacing:-0.090px;">Operation</div>
<div class="a" style="left:1033px;top:298.2px;width:23.3px;height:27.3px;background:#0696d7;border-radius:2px"></div>
<svg class="a" style="left:1033px;top:298px" width="57" height="28" viewBox="1033 298 57 28"><polygon points="1037,307.5 1039.6,304.5 1049,304.5 1046.6,307.5" fill="#b4e0ff"/><polygon points="1046.6,307.5 1049,304.5 1049,314.5 1046.6,317.2" fill="#5fa9e0"/><rect x="1037" y="307.5" width="9.6" height="9.7" fill="#8ccbf9"/><polygon points="1037,317.4 1046.6,317.4 1049,314.8 1049,317.3 1046.6,320 1037,320" fill="#f3e3d0"/><path d="M1051.5 306V317" stroke="#fff" stroke-width="1.2"/><polygon points="1051.5,303.8 1049.4,307.5 1053.6,307.5" fill="#fff"/><path d="M1066 307.8Q1068 304.5 1071 305.5Q1074.5 306.5 1077.6 304.2V313.5Q1074.5 316 1072.8 314.2V317Q1070.5 314.5 1068.3 316.3L1066 318Z" fill="#4f97d6"/><path d="M1066 307.8Q1068 304.5 1071 305.5Q1072.5 306 1072.8 306V317Q1070.5 314.5 1068.3 316.3L1066 318Z" fill="#6aafe2"/><path d="M1066 319.3L1068.3 317.6Q1070.5 316 1072.8 318.4L1077.6 314.9" fill="none" stroke="#c4c4c4" stroke-width="1.4"/><path d="M1080.5 306V317" stroke="#222" stroke-width="1.1"/><polygon points="1080.5,303.8 1078.5,307.5 1082.5,307.5" fill="#222"/></svg>
<div class="a" style="left:1033px;top:328.5px;width:77.3px;height:27px;background:#0696d7;border-radius:2px"></div>
<svg class="a" style="left:1035px;top:330px" width="100" height="25" viewBox="1035 330 100 25"><path d="M1041.6 334.2V347.2L1044.6 344.5L1046.9 349.7L1048.9 348.8L1046.7 343.8H1050.8Z" fill="#dcdcdc" stroke="#333" stroke-width="0.9" stroke-linejoin="round"/><path d="M1122.3 338.2L1130.3 346.2M1130.3 338.2L1122.3 346.2" stroke="#444" stroke-width="1.7"/></svg>
<div class="t" style="left:1056.00px;top:335.13px;font-size:11px;line-height:14px;color:#fff;letter-spacing:-0.094px;">1 selected</div>
<div class="a" style="left:1033.5px;top:358.6px;width:131.2px;height:27px;background:#fff;border:1.5px solid #dadada;border-radius:3px"></div>
<div class="a" style="left:1033.5px;top:388.6px;width:131.2px;height:27px;background:#fff;border:1.5px solid #dadada;border-radius:3px"></div>
<div class="a" style="left:1033.5px;top:418.6px;width:131.2px;height:27px;background:#fff;border:1.5px solid #dadada;border-radius:3px"></div>
<div class="a" style="left:1033.5px;top:518.6px;width:131.2px;height:27px;background:#fff;border:1.5px solid #dadada;border-radius:3px"></div>
<div class="a" style="left:1034px;top:449.5px;width:130px;height:25px;background:#fff;border:1px solid #c8c8c8"></div>
<div class="a" style="left:1034px;top:479.5px;width:130px;height:25px;background:#fff;border:1px solid #c8c8c8"></div>
<svg class="a" style="left:948px;top:357px" width="248" height="253" viewBox="948 357 248 253"><polygon points="1153.40,370.20 1159.00,370.20 1156.20,373.80" fill="#222"/><polygon points="1153.40,400.20 1159.00,400.20 1156.20,403.80" fill="#222"/><polygon points="1153.40,430.20 1159.00,430.20 1156.20,433.80" fill="#222"/><polygon points="1153.40,530.20 1159.00,530.20 1156.20,533.80" fill="#222"/><path d="M1041.2 364.5V379" stroke="#14234b" stroke-width="1.9"/><path d="M1042 371.7H1048" stroke="#222" stroke-width="1"/><polygon points="1046.5,369 1050.6,371.7 1046.5,374.4" fill="#222"/><polygon points="1042.2,394.5 1051.9,398.6 1051.9,405 1047.5,402.8 1042.2,400.6" fill="#f2b183" stroke="#d9935f" stroke-width="0.5"/><path d="M1047 399.5L1038.3 408" stroke="#444" stroke-width="0.9"/><polygon points="1037.2,409 1038,405.4 1040.8,408.2" fill="#444"/><path d="M1038 424.1V439.1M1052.1 424.1V439.1" stroke="#14234b" stroke-width="1.8"/><path d="M1040.5 431.7H1049.6" stroke="#222" stroke-width="0.9"/><polygon points="1039.3,431.7 1042.6,429.7 1042.6,433.7" fill="#222"/><polygon points="1050.8,431.7 1047.5,429.7 1047.5,433.7" fill="#222"/><rect x="1042" y="525" width="6.6" height="10" fill="#efb0b0"/><path d="M1038.7 529.5V537.8H1051.5V529.5" fill="none" stroke="#4a9be0" stroke-width="1.5"/><rect x="1039.5" y="535" width="11.3" height="2.5" fill="#8cc4f4"/><polygon points="957,557.6 963.3,561.7 957,565.8" fill="#333"/><circle cx="961.7" cy="596.8" r="6" fill="#0a0a0a"/><circle cx="961.7" cy="593.6" r="1.05" fill="#fff"/><path d="M960.4 595.7H962.4V599.8M960.3 599.9H963.5" stroke="#fff" stroke-width="1.3" fill="none"/></svg>
<div class="t" style="left:1057.50px;top:365.13px;font-size:11px;line-height:14px;color:#1a1a1a;letter-spacing:-0.067px;">Profile Plane</div>
<div class="t" style="left:1057.50px;top:395.13px;font-size:11px;line-height:14px;color:#1a1a1a;letter-spacing:-0.108px;">One Side</div>
<div class="t" style="left:1057.50px;top:425.13px;font-size:11px;line-height:14px;color:#1a1a1a;letter-spacing:-0.074px;">Distance</div>
<div class="t" style="left:1057.70px;top:525.13px;font-size:11px;line-height:14px;color:#1a1a1a;letter-spacing:-0.206px;">Cut</div>
<div class="t" style="left:1037.40px;top:455.13px;font-size:11px;line-height:14px;color:#1a1a1a;letter-spacing:-0.131px;">-30 mm</div>
<div class="t" style="left:1037.40px;top:485.13px;font-size:11px;line-height:14px;color:#1a1a1a;letter-spacing:-0.100px;">0.0 deg</div>
<div class="t" style="left:972.40px;top:555.13px;font-size:11px;line-height:14px;color:#1a1a1a;font-weight:bold;letter-spacing:-0.029px;">Objects To Cut</div>
<div class="a" style="left:1055px;top:587.2px;width:60px;height:18.3px;background:#e5e5e5;border:1px solid #bcbcbc"></div>
<div class="a" style="left:1125.2px;top:587.2px;width:59.5px;height:18.3px;background:#e5e5e5;border:1px solid #bcbcbc"></div>
<div class="t" style="left:1076.90px;top:588.64px;font-size:12px;line-height:16px;color:#555;letter-spacing:-0.069px;">OK</div>
<div class="t" style="left:1136.80px;top:588.64px;font-size:12px;line-height:16px;color:#555;letter-spacing:-0.059px;">Cancel</div>
<div class="a" style="left:774.2px;top:826.8px;width:107.5px;height:22.3px;background:#f0f0f0;"></div>
<svg class="a" style="left:774px;top:826px" width="108" height="24" viewBox="774 826 108 24"><path d="M786 828V848" stroke="#d4d4d4" stroke-width="1.2"/><circle cx="778" cy="830" r="0.5" fill="#d0d0d0"/><circle cx="781" cy="831.6" r="0.5" fill="#d0d0d0"/><circle cx="778" cy="833.2" r="0.5" fill="#d0d0d0"/><circle cx="781" cy="834.8" r="0.5" fill="#d0d0d0"/><circle cx="778" cy="836.4" r="0.5" fill="#d0d0d0"/><circle cx="781" cy="838" r="0.5" fill="#d0d0d0"/><circle cx="778" cy="839.6" r="0.5" fill="#d0d0d0"/><circle cx="781" cy="841.2" r="0.5" fill="#d0d0d0"/><circle cx="778" cy="842.8" r="0.5" fill="#d0d0d0"/><circle cx="781" cy="844.4" r="0.5" fill="#d0d0d0"/><circle cx="778" cy="846" r="0.5" fill="#d0d0d0"/><circle cx="781" cy="847.6" r="0.5" fill="#d0d0d0"/><rect x="788.5" y="828.5" width="69.5" height="19" fill="#fff" stroke="#c2c2c2" stroke-width="1"/><path d="M830.6 832.5V843.5" stroke="#222" stroke-width="0.9"/><circle cx="870.2" cy="832.5" r="1.5" fill="#8a8a8a"/><circle cx="870.2" cy="838" r="1.5" fill="#8a8a8a"/><circle cx="870.2" cy="843.5" r="1.5" fill="#8a8a8a"/></svg>
<div class="t" style="left:814.40px;top:831.82px;font-size:10px;line-height:13px;color:#333;letter-spacing:0.115px;">-30</div>
<div class="a" style="left:807px;top:886px;width:177px;height:17.3px;background:#fbfbfb;border:1px solid #6a6a6a"></div>
<div class="t" style="left:811.00px;top:887.06px;font-size:14px;line-height:18px;color:#111;letter-spacing:0.039px;font-family:'Liberation Serif',serif;">Hold Ctrl to modify selection</div>
<svg class="a" style="left:640px;top:785px" width="32" height="30" viewBox="640 785 32 30"><path d="M650.7 790.2H660.3V798.6H666.4L655.5 811L644.6 798.6H650.7Z" fill="#2e86bf" stroke="#e8eaf0" stroke-width="1.3" stroke-linejoin="round"/></svg><div class="a" style="left:5px;top:960.3px;width:299.5px;height:24.2px;background:#f1f1f1;border:1px solid #c6c6c6"></div>
<div class="t" style="left:30.00px;top:965.33px;font-size:11px;line-height:14px;color:#555;letter-spacing:-0.021px;">COMMENTS</div>
<svg class="a" style="left:280px;top:962px" width="25" height="22" viewBox="280 962 25 22"><circle cx="288.3" cy="972.3" r="4.4" fill="#1a1a1a"/><path d="M285.6 972.3H291M288.3 969.6V975" stroke="#fff" stroke-width="1.2"/><path d="M300.3 967V978M302 969V975.5" stroke="#777" stroke-width="0.8"/></svg>
<div class="a" style="left:482px;top:961.2px;width:237px;height:23.5px;background:#f0f0f0;"></div>
<svg class="a" style="left:482px;top:961px" width="237" height="24" viewBox="482 961 237 24"><ellipse cx="492.5" cy="974.3" rx="7" ry="3" fill="none" stroke="#222" stroke-width="1.2"/><path d="M493 966V981" stroke="#f0f0f0" stroke-width="3.4"/><path d="M493 967V981" stroke="#222" stroke-width="1"/><path d="M490.8 968.3L493 965.3L495.2 968.3" fill="#f0f0f0" stroke="#222" stroke-width="0.9"/><polygon points="485.7,976.5 489.5,974.8 489.2,978.9" fill="#222"/><rect x="518.5" y="971" width="15" height="9.3" fill="#f8f8f8" stroke="#333" stroke-width="1.1"/><rect x="521.3" y="974" width="9.4" height="3.4" fill="#b9bcc4" stroke="#444" stroke-width="0.7"/><path d="M519 970.5L521.5 966.5L524 969L528.5 966.2L531 970.5" fill="#c9c9c9" stroke="#333" stroke-width="0.9"/><path d="M547.8 980.5Q545.5 977.8 544.5 975.2Q544 973.5 545.3 973.4Q546.3 973.4 547.5 975.2V968.3Q547.6 967.2 548.6 967.2Q549.5 967.2 549.6 968.3V966.7Q549.7 965.6 550.7 965.6Q551.7 965.6 551.8 966.7V967.3Q551.9 966.3 552.9 966.3Q553.9 966.3 554 967.4V968.7Q554.1 967.8 555 967.8Q556 967.8 556.1 969V975.5Q556 978.5 554.6 980.5Z" fill="#fafafa" stroke="#222" stroke-width="0.9" stroke-linejoin="round"/><path d="M549.6 968.3V973M551.8 967.3V973M554 968.7V973" stroke="#222" stroke-width="0.7"/><circle cx="575.5" cy="971.8" r="4.7" fill="#dfeaf6" stroke="#444" stroke-width="1.1"/><path d="M579 975.5L583.5 980.3" stroke="#222" stroke-width="2.2" stroke-linecap="round"/><path d="M580.8 968H586M583.4 965.5V970.5M581 972.5H585.8" stroke="#222" stroke-width="0.9"/><circle cx="602.5" cy="971.3" r="5.7" fill="#f4f4f4" stroke="#333" stroke-width="1.2"/><rect x="599.2" y="968.2" width="6.6" height="6.2" fill="#dcdcdc" stroke="#444" stroke-width="0.8"/><path d="M606.7 975.8L611.3 980.5" stroke="#222" stroke-width="2.4" stroke-linecap="round"/><rect x="629.7" y="965.5" width="15" height="11" rx="1" fill="#fafafa" stroke="#333" stroke-width="1.1"/><rect x="631.7" y="967.5" width="11" height="7" fill="#a8c8ee" stroke="#5577aa" stroke-width="0.6"/><path d="M635.5 977V979.5H639V977M633.3 980H641.2" stroke="#333" stroke-width="1" fill="none"/><rect x="660.5" y="965.5" width="15" height="15" fill="#c9c9cf" stroke="#333" stroke-width="0.9"/><path d="M663.5 965.5V980.5M660.5 968.5H675.5" stroke="#4a4a55" stroke-width="0.6"/><path d="M666.5 965.5V980.5M660.5 971.5H675.5" stroke="#4a4a55" stroke-width="0.6"/><path d="M669.5 965.5V980.5M660.5 974.5H675.5" stroke="#4a4a55" stroke-width="0.6"/><path d="M672.5 965.5V980.5M660.5 977.5H675.5" stroke="#4a4a55" stroke-width="0.6"/><rect x="691.3" y="966.5" width="6.6" height="6" rx="0.8" fill="#a9c1ea" stroke="#2b4a86" stroke-width="1"/><rect x="699.3" y="966.5" width="6.6" height="6" rx="0.8" fill="#a9c1ea" stroke="#2b4a86" stroke-width="1"/><rect x="691.3" y="974" width="6.6" height="6" rx="0.8" fill="#a9c1ea" stroke="#2b4a86" stroke-width="1"/><rect x="699.3" y="974" width="6.6" height="6" rx="0.8" fill="#a9c1ea" stroke="#2b4a86" stroke-width="1"/><polygon points="506.10,970.90 511.50,970.90 508.80,974.30" fill="#222"/><polygon points="617.30,970.90 622.70,970.90 620.00,974.30" fill="#222"/><polygon points="647.80,970.90 653.20,970.90 650.50,974.30" fill="#222"/><polygon points="678.30,970.90 683.70,970.90 681.00,974.30" fill="#222"/><polygon points="708.80,970.90 714.20,970.90 711.50,974.30" fill="#222"/></svg>
<div class="t" style="left:1028.00px;top:965.33px;font-size:11px;line-height:14px;color:#333;font-weight:bold;letter-spacing:0.009px;">1 Profile | Area : 750.00 mm^2</div>
<div class="a" style="left:0px;top:989px;width:1202px;height:51px;background:#f2f2f2;"></div>
<div class="a" style="left:0px;top:989px;width:1202px;height:1px;background:#c9c9c9;"></div>
<svg class="a" style="left:0px;top:990px" width="1202" height="50" viewBox="0 990 1202 50"><rect x="11.9" y="1007" width="2" height="14" fill="#4a4a4e"/><polygon points="24,1007.3 24,1020.7 14.4,1014" fill="#4a4a4e"/><polygon points="46,1007.3 46,1020.7 36,1014" fill="#4a4a4e"/><rect x="47.2" y="1011" width="1.9" height="6" fill="#4a4a4e"/><polygon points="62,1006 62,1022 73.8,1014" fill="#4a4a4e"/><rect x="86" y="1011" width="1.9" height="6" fill="#4a4a4e"/><polygon points="89,1007.3 89,1020.7 99,1014" fill="#4a4a4e"/><polygon points="112,1007.3 112,1020.7 121.8,1014" fill="#4a4a4e"/><rect x="122" y="1007" width="2" height="14" fill="#4a4a4e"/><rect x="145" y="997.1" width="68" height="5.8" fill="#e296e6"/><rect x="191" y="1000.8" width="22.8" height="24.2" rx="2" fill="#0696d7"/><path d="M150.5 1006.2H158.5M148.2 1008.5V1017M160.8 1008.5V1012.5M150.5 1018.6H154.5" stroke="#555" stroke-width="0.8" fill="none"/><rect x="146.8" y="1004.7" width="2.2" height="2.2" fill="#1e88e5"/><rect x="159.9" y="1004.7" width="2.2" height="2.2" fill="#1e88e5"/><rect x="146.8" y="1017.8" width="2.2" height="2.2" fill="#1e88e5"/><path d="M155.2 1020.3L156.2 1019.6L157.4 1018.4Z" fill="#555"/><path d="M156 1018L160.6 1013L162.7 1015.2L158 1020Z" fill="#f7b93e"/><ellipse cx="162" cy="1014.2" rx="1.5" ry="1.1" fill="#f03838" transform="rotate(45 162 1014.2)"/><path d="M198.5 1006.2H206.5M196.2 1008.5V1017M208.8 1008.5V1012.5M198.5 1018.6H202.5" stroke="#555" stroke-width="0.8" fill="none"/><rect x="194.8" y="1004.7" width="2.2" height="2.2" fill="#1c6fd0"/><rect x="207.9" y="1004.7" width="2.2" height="2.2" fill="#1c6fd0"/><rect x="194.8" y="1017.8" width="2.2" height="2.2" fill="#1c6fd0"/><path d="M203.2 1020.3L204.2 1019.6L205.4 1018.4Z" fill="#555"/><path d="M204 1018L208.6 1013L210.7 1015.2L206 1020Z" fill="#f7b93e"/><ellipse cx="210" cy="1014.2" rx="1.5" ry="1.1" fill="#f03838" transform="rotate(45 210 1014.2)"/><polygon points="171,1008.5 173.5,1005 183,1005 180.5,1008.5" fill="#8ccbf9"/><polygon points="180.5,1008.5 183,1005 183,1014.8 180.5,1018" fill="#4a93cc"/><rect x="171" y="1008.5" width="9.5" height="9.5" fill="#6aafe2"/><polygon points="171,1018.5 180.5,1018.5 183,1015.5 183,1017.8 180.5,1021 171,1021" fill="#dedede"/><path d="M185.5 1007.5V1018" stroke="#222" stroke-width="1"/><polygon points="185.5,1005.5 183.7,1008.6 187.3,1008.6" fill="#222"/><path d="M156.1 1024V1029.8H203.1V1025M179 1024V1029.8" fill="none" stroke="#c8c8c8" stroke-width="1.9"/><path d="M209.2 999.2H221.2V1002.4L216 1007.6V1030.8H214.2V1007.6L209.2 1002.4Z" fill="#636363"/><rect x="1177.5" y="1005.5" width="3.6" height="16.4" fill="#8c8c8c" transform="rotate(0 1179.3 1013.7)"/><rect x="1177.5" y="1005.5" width="3.6" height="16.4" fill="#8c8c8c" transform="rotate(45 1179.3 1013.7)"/><rect x="1177.5" y="1005.5" width="3.6" height="16.4" fill="#8c8c8c" transform="rotate(90 1179.3 1013.7)"/><rect x="1177.5" y="1005.5" width="3.6" height="16.4" fill="#8c8c8c" transform="rotate(135 1179.3 1013.7)"/><circle cx="1179.3" cy="1013.7" r="5.9" fill="#8c8c8c"/><circle cx="1179.3" cy="1013.7" r="2.8" fill="#f2f2f2"/></svg>
<div class="a" style="left:0px;top:0px;width:1px;height:1040px;background:#8c8c8c;"></div><div class="a" style="left:1201px;top:0px;width:1px;height:1040px;background:#8c8c8c;"></div><div class="a" style="left:0px;top:1038.6px;width:1202px;height:1.4px;background:#9a9a9a;"></div>
</body></html>
